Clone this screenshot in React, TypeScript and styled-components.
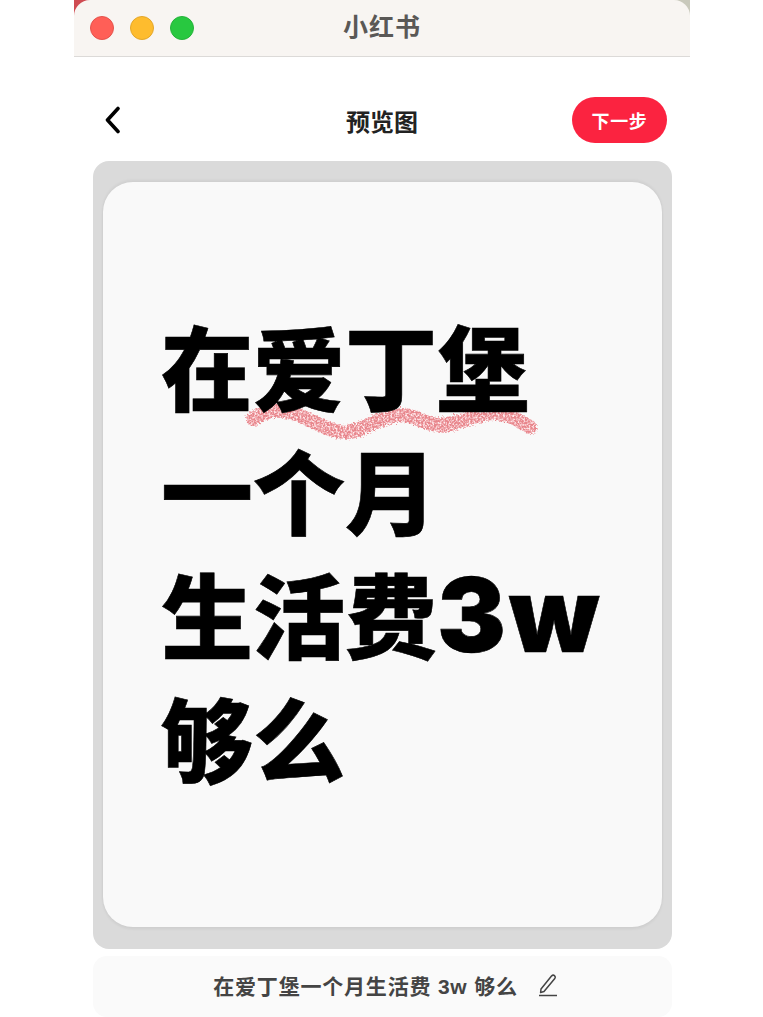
import styled, { createGlobalStyle } from "styled-components";

const GlobalStyle = createGlobalStyle`
  html, body {
    margin: 0;
    padding: 0;
    background: #fff;
    height: 1017px;
    overflow: hidden;
    font-family: "Liberation Sans", "Noto Sans CJK SC", sans-serif;
  }
`;

const Page = styled.div`
  width: 616px;
  margin-left: 74px;
`;

const TitleBackdrop = styled.div`
  height: 57px;
  background: linear-gradient(to right, #cf4b52 50%, #c9c9bc 50%);
`;

const TitleBar = styled.div`
  position: relative;
  box-sizing: border-box;
  height: 57px;
  padding-bottom: 6px;
  display: flex;
  align-items: center;
  justify-content: center;
  background: #f8f5f2;
  border-bottom: 1px solid #dcdad8;
  border-radius: 16px 16px 0 0;
`;

const Lights = styled.div`
  position: absolute;
  left: 16px;
  top: 16px;
  display: flex;
  gap: 16px;
`;

const Light = styled.span<{ $color: string; $edge: string }>`
  width: 24px;
  height: 24px;
  border-radius: 50%;
  box-sizing: border-box;
  background: ${(props) => props.$color};
  border: 1px solid ${(props) => props.$edge};
`;

const AppName = styled.div`
  font-size: 25px;
  font-weight: 700;
  letter-spacing: 1px;
  color: #5a5856;
  font-family: "Noto Sans CJK SC", sans-serif;
`;

const NavBar = styled.div`
  box-sizing: border-box;
  height: 104px;
  display: grid;
  grid-template-columns: 1fr auto 1fr;
  align-items: center;
  padding: 22px 23px 0;
`;

const BackButton = styled.button`
  justify-self: start;
  display: flex;
  margin-left: 6px;
  padding: 0;
  border: none;
  background: none;
`;

const NavTitle = styled.div`
  font-size: 24px;
  font-weight: 700;
  color: #222;
  font-family: "Noto Sans CJK SC", sans-serif;
`;

const NextButton = styled.button`
  justify-self: end;
  width: 95px;
  height: 46px;
  padding: 0;
  border: none;
  border-radius: 23px;
  background: #fb2340;
  color: #fff;
  font-size: 18px;
  font-weight: 700;
  letter-spacing: 0.6px;
  font-family: "Noto Sans CJK SC", sans-serif;
`;

const Frame = styled.div`
  box-sizing: border-box;
  width: 579px;
  height: 788px;
  margin-left: 19px;
  padding: 21px 10px 22px;
  background: #dadada;
  border-radius: 16px;
`;

const Card = styled.div`
  box-sizing: border-box;
  isolation: isolate;
  height: 100%;
  padding: 120px 0 0 58px;
  background: #f9f9f9;
  border-radius: 30px;
  box-shadow: 0 -2px 3px rgba(0, 0, 0, 0.05), 0 2px 3px rgba(0, 0, 0, 0.06);
`;

const Headline = styled.h1`
  margin: 0;
  font-size: 92px;
  line-height: 124px;
  font-weight: 900;
  color: #000;
  white-space: nowrap;
  -webkit-text-stroke: 0.6px #000;
  font-family: "Noto Sans CJK SC", sans-serif;
`;

const HeadLine = styled.div`
  position: relative;
  height: 124px;
`;

const Latin = styled.span`
  font-family: Inter, "Liberation Sans", sans-serif;
  font-size: 103px;
  font-weight: 900;
  letter-spacing: 3px;
`;

const Squiggle = styled.svg`
  position: absolute;
  z-index: -1;
  left: 79px;
  top: 97px;
`;

const Caption = styled.div`
  box-sizing: border-box;
  width: 579px;
  height: 61px;
  margin: 7px 0 0 19px;
  padding: 0 0 3px 6px;
  display: flex;
  align-items: center;
  justify-content: center;
  gap: 20px;
  background: #fafafa;
  border-radius: 14px;
`;

const CaptionText = styled.div`
  font-size: 21px;
  font-weight: 700;
  letter-spacing: 0.8px;
  color: #444;
  font-family: "Liberation Sans", "Noto Sans CJK SC", sans-serif;
`;

function App() {
  return (
    <Page>
      <GlobalStyle />
      <TitleBackdrop>
        <TitleBar>
          <Lights>
            <Light $color="#ff5f57" $edge="#e5534c" />
            <Light $color="#febc2e" $edge="#e4a72a" />
            <Light $color="#28c840" $edge="#25b33a" />
          </Lights>
          <AppName>小红书</AppName>
        </TitleBar>
      </TitleBackdrop>
      <NavBar>
        <BackButton>
          <svg width="20" height="28" viewBox="0 0 20 28" fill="none">
            <path d="M15 2.5 L4.5 14 L15 25.5" stroke="#000" strokeWidth="3.6" strokeLinecap="round" strokeLinejoin="round" />
          </svg>
        </BackButton>
        <NavTitle>预览图</NavTitle>
        <NextButton>下一步</NextButton>
      </NavBar>
      <Frame>
        <Card>
          <Headline>
            <HeadLine>
              在爱丁堡
              <Squiggle width="310" height="48" viewBox="0 0 310 48" fill="none">
                <defs>
                  <filter id="rough" x="-5%" y="-40%" width="110%" height="180%" colorInterpolationFilters="sRGB">
                    <feTurbulence type="fractalNoise" baseFrequency="0.55" numOctaves="2" seed="4" result="noise" />
                    <feDisplacementMap in="SourceGraphic" in2="noise" scale="7" result="edge" />
                    <feColorMatrix
                      in="noise"
                      type="matrix"
                      values="0 0 0 0 1  0 0 0 0 0.92  0 0 0 0 0.93  3 0 0 0 -1.2"
                      result="speck"
                    />
                    <feComposite in="speck" in2="edge" operator="in" result="specks" />
                    <feMerge>
                      <feMergeNode in="edge" />
                      <feMergeNode in="specks" />
                    </feMerge>
                  </filter>
                </defs>
                <path
                  d="M13 20 C28 10 40 10 56 15 C75 22 90 34 108 33 C125 32 138 17 160 16 C176 15 182 26 200 26 C218 26 235 14 255 14 C270 14 280 23 290 28"
                  stroke="#e8868c"
                  strokeWidth="14"
                  strokeLinecap="round"
                  filter="url(#rough)"
                />
              </Squiggle>
            </HeadLine>
            <HeadLine>一个月</HeadLine>
            <HeadLine>
              生活费<Latin>3w</Latin>
            </HeadLine>
            <HeadLine>够么</HeadLine>
          </Headline>
        </Card>
      </Frame>
      <Caption>
        <CaptionText>在爱丁堡一个月生活费 3w 够么</CaptionText>
        <svg width="20" height="24" viewBox="0 0 20 24" fill="none" stroke="#444" strokeWidth="1.5" strokeLinejoin="round">
          <path d="M3 16 L13.5 3 Q15 1.5 16.5 2.6 Q18 4 16.8 5.6 L6 18.5 L2.6 19.5 Z" />
          <path d="M1 22.5 H19" />
        </svg>
      </Caption>
    </Page>
  );
}

export default App;
